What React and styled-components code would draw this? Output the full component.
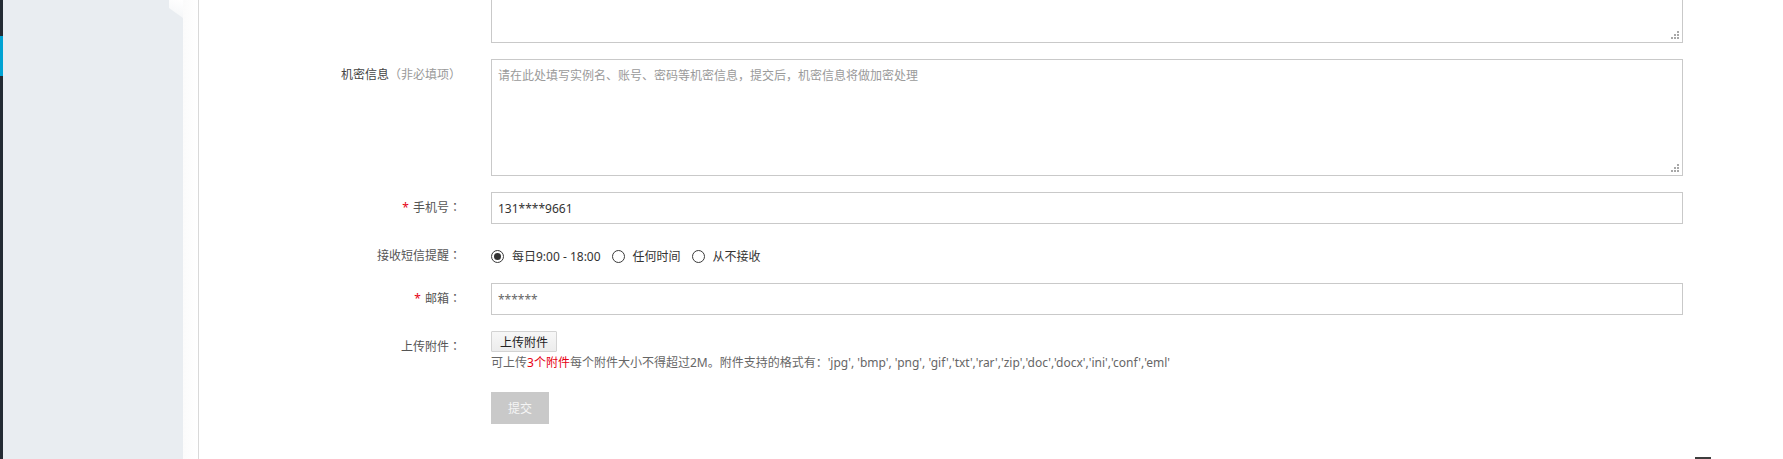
import React from "react";
import styled, { createGlobalStyle } from "styled-components";

const GlobalStyle = createGlobalStyle`
  html, body { margin: 0; padding: 0; background: #fff; }
  body {
    font-family: "Noto Sans", "Noto Sans CJK SC", sans-serif;
    font-size: 12px;
    color: #333;
    overflow: hidden;
  }
`;

const Page = styled.div`
  display: flex;
  width: 1783px;
  height: 459px;
  overflow: hidden;
  background: #fff;
`;

const Rail = styled.div`
  width: 3px;
  flex: none;
  background: #232b33;
  display: flex;
  flex-direction: column;
`;

const RailMark = styled.div`
  margin-top: 36px;
  height: 40px;
  background: #00a3d3;
`;

const SidePanel = styled.div`
  position: relative;
  width: 180px;
  flex: none;
  background: #e9edf1;
`;

const Fold = styled.div`
  position: absolute;
  top: 0;
  right: 0;
  width: 14px;
  height: 18px;
  background: linear-gradient(200deg, #ffffff 0%, #f3f5f7 100%);
  clip-path: polygon(0 0, 100% 0, 100% 100%, 0 45%);
`;

const Gutter = styled.div`
  width: 15px;
  flex: none;
  background: linear-gradient(90deg, #fbfbfb, #ffffff);
`;

const Main = styled.div`
  position: relative;
  flex: 1;
  border-left: 1px solid #d9d9d9;
  overflow: hidden;
`;

const Form = styled.div`
  display: flex;
  flex-direction: column;
  margin-top: -74px;
`;

const Row = styled.div`
  display: grid;
  grid-template-columns: 262px 1192px;
  column-gap: 30px;
  margin-top: ${(p) => p.$mt || 0}px;
`;

const Label = styled.div`
  font-family: "Noto Sans", "Noto Sans CJK TC", "Noto Sans CJK SC", sans-serif;
  text-align: right;
  line-height: 32px;
  font-size: 12px;
  color: #555;
  white-space: nowrap;
`;

const Strong = styled.span`
  color: #444;
`;

const Muted = styled.span`
  color: #999;
`;

const Star = styled.span`
  color: #e60012;
  margin-right: 4px;
`;

const AreaWrap = styled.div`
  position: relative;
  height: 117px;
`;

const Area = styled.textarea`
  box-sizing: border-box;
  display: block;
  width: 100%;
  height: 100%;
  margin: 0;
  padding: 8px 6px;
  border: 1px solid #c9c9c9;
  border-radius: 0;
  font: inherit;
  font-size: 12px;
  line-height: 16px;
  color: #333;
  resize: none;
  outline: none;
  &::placeholder { color: #9a9a9a; }
`;

const Grip = styled.svg`
  position: absolute;
  right: 3px;
  bottom: 3px;
  width: 9px;
  height: 9px;
`;

const Input = styled.input`
  box-sizing: border-box;
  display: block;
  width: 100%;
  height: 32px;
  margin: 0;
  padding: 0 6px;
  border: 1px solid #c9c9c9;
  border-radius: 0;
  font: inherit;
  font-size: 12px;
  color: ${(p) => p.$tone || "#333"};
  outline: none;
`;

const RadioGroup = styled.div`
  display: flex;
  align-items: center;
  height: 32px;
`;

const RadioOption = styled.label`
  display: flex;
  align-items: center;
  margin-right: 11px;
  color: #333;
  font-size: 12px;
`;

const Circle = styled.span`
  box-sizing: border-box;
  width: 13px;
  height: 13px;
  border: 1px solid #3a3a3a;
  border-radius: 50%;
  margin-right: 8px;
  display: flex;
  align-items: center;
  justify-content: center;
  &::after {
    content: "";
    width: 7px;
    height: 7px;
    border-radius: 50%;
    background: ${(p) => (p.$checked ? "#333" : "transparent")};
  }
`;

const Controls = styled.div`
  display: flex;
  flex-direction: column;
  align-items: flex-start;
`;

const UploadButton = styled.button`
  box-sizing: border-box;
  height: 21px;
  width: 66px;
  padding: 0;
  margin: 0;
  border: 1px solid #d3d3d3;
  border-radius: 1px;
  background: linear-gradient(#f7f7f7, #ececec);
  font: inherit;
  font-size: 12px;
  color: #222;
`;

const Hint = styled.div`
  margin-top: 2px;
  line-height: 18px;
  font-size: 12px;
  color: #666;
  white-space: nowrap;
`;

const Red = styled.span`
  color: #e60012;
`;

const Submit = styled.button`
  margin: 20px 0 0;
  width: 58px;
  height: 32px;
  padding: 0;
  border: none;
  border-radius: 0;
  background: #c9c9c9;
  color: #f5f5f5;
  font: inherit;
  font-size: 12px;
`;

const FloatTab = styled.div`
  position: absolute;
  right: 72px;
  bottom: 0;
  width: 16px;
  height: 2px;
  background: #3e3e3e;
`;

const GripIcon = () => (
  <Grip viewBox="0 0 9 9">
    <rect x="6" y="0" width="2" height="2" fill="#a8a8a8" />
    <rect x="3" y="3" width="2" height="2" fill="#a8a8a8" />
    <rect x="6" y="3" width="2" height="2" fill="#a8a8a8" />
    <rect x="0" y="6" width="2" height="2" fill="#a8a8a8" />
    <rect x="3" y="6" width="2" height="2" fill="#a8a8a8" />
    <rect x="6" y="6" width="2" height="2" fill="#a8a8a8" />
  </Grip>
);

export default function App() {
  return (
    <>
      <GlobalStyle />
      <Page>
        <Rail>
          <RailMark />
        </Rail>
        <SidePanel>
          <Fold />
        </SidePanel>
        <Gutter />
        <Main>
          <Form>
            <Row>
              <Label />
              <AreaWrap>
                <Area readOnly />
                <GripIcon />
              </AreaWrap>
            </Row>
            <Row $mt={16}>
              <Label>
                <Strong>机密信息</Strong>
                <Muted>（非必填项）</Muted>
              </Label>
              <AreaWrap>
                <Area
                  readOnly
                  placeholder="请在此处填写实例名、账号、密码等机密信息，提交后，机密信息将做加密处理"
                />
                <GripIcon />
              </AreaWrap>
            </Row>
            <Row $mt={16}>
              <Label>
                <Star>*</Star>手机号：
              </Label>
              <Input readOnly value="131****9661" />
            </Row>
            <Row $mt={16}>
              <Label>接收短信提醒：</Label>
              <RadioGroup>
                <RadioOption>
                  <Circle $checked />
                  每日9:00 - 18:00
                </RadioOption>
                <RadioOption>
                  <Circle />
                  任何时间
                </RadioOption>
                <RadioOption>
                  <Circle />
                  从不接收
                </RadioOption>
              </RadioGroup>
            </Row>
            <Row $mt={11}>
              <Label>
                <Star>*</Star>邮箱：
              </Label>
              <Input readOnly value="******" $tone="#666" />
            </Row>
            <Row $mt={16}>
              <Label>上传附件：</Label>
              <Controls>
                <UploadButton type="button">上传附件</UploadButton>
                <Hint>
                  可上传<Red>3个附件</Red>每个附件大小不得超过2M。附件支持的格式有：'jpg', 'bmp', 'png', 'gif','txt','rar','zip','doc','docx','ini','conf','eml'
                </Hint>
                <Submit type="button">提交</Submit>
              </Controls>
            </Row>
          </Form>
          <FloatTab />
        </Main>
      </Page>
    </>
  );
}
